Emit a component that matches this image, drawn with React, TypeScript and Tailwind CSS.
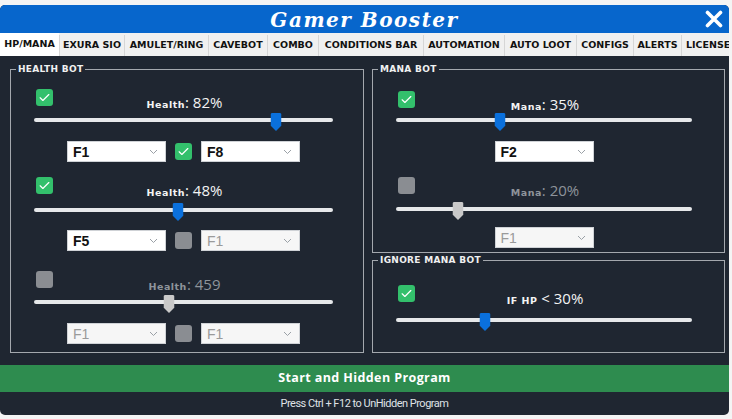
import React from "react";

const tabs = [
  { name: "HP/MANA", w: "w-[59px]", active: true },
  { name: "EXURA SIO", w: "w-[65px]" },
  { name: "AMULET/RING", w: "w-[84px]" },
  { name: "CAVEBOT", w: "w-[59px]" },
  { name: "COMBO", w: "w-[51px]" },
  { name: "CONDITIONS BAR", w: "w-[105px]" },
  { name: "AUTOMATION", w: "w-[81px]" },
  { name: "AUTO LOOT", w: "w-[72px]" },
  { name: "CONFIGS", w: "w-[57px]" },
  { name: "ALERTS", w: "w-[48px]" },
  { name: "LICENSE", w: "w-[60px] justify-start pl-[4px]" },
];

function Check({ on }: { on: boolean }) {
  return (
    <div
      className={
        "w-[17px] h-[17px] rounded-[3px] flex items-center justify-center shrink-0 " +
        (on ? "bg-[#33c06c]" : "bg-[#8a8d92]")
      }
    >
      {on && (
        <svg width="13" height="13" viewBox="0 0 24 24" fill="none">
          <path d="M4 12.5l5 5L20 6.5" stroke="white" strokeWidth="2.2" strokeLinecap="round" strokeLinejoin="round" />
        </svg>
      )}
    </div>
  );
}

function Select({ value, on }: { value: string; on: boolean }) {
  return (
    <div
      className={
        "w-[99px] h-[21px] flex items-center justify-between pl-[5px] pr-[7px] border border-[#cfd2d6] " +
        (on ? "bg-white" : "bg-[#f6f6f6]")
      }
    >
      <span
        className={
          "font-['Liberation_Sans',sans-serif] text-[14px] leading-none " +
          (on ? "font-bold text-[#111]" : "text-[#9a9a9a]")
        }
      >
        {value}
      </span>
      <svg width="9" height="6" viewBox="0 0 9 6" fill="none">
        <path d="M1 1l3.5 3.5L8 1" stroke="#9aa0a6" strokeWidth="1" />
      </svg>
    </div>
  );
}

function Slider({ pct, on, width }: { pct: number; on: boolean; width: string }) {
  return (
    <div className={"relative h-[18px] " + width}>
      <div className="absolute left-0 right-0 top-[5px] h-[4px] rounded-full bg-[#e6e8ea]" />
      <svg
        className="absolute top-0 -translate-x-1/2"
        style={{ left: `${pct}%` }}
        width="11"
        height="18"
        viewBox="0 0 11 18"
      >
        <path
          d="M1.5 0H9.5Q11 0 11 1.5V12.5L5.5 18L0 12.5V1.5Q0 0 1.5 0Z"
          fill={on ? "#0a70dc" : "#c9c9c9"}
        />
      </svg>
    </div>
  );
}

function Label({ name, value, on }: { name: string; value: string; on: boolean }) {
  return (
    <div className={"text-center leading-none mt-[5px] " + (on ? "text-[#f4f4f4]" : "text-[#8e949b]")}>
      <span className="font-['DejaVu_Sans',sans-serif] font-bold text-[9.5px] tracking-[0.5px]">{name}</span>
      <span className="font-['Open_Sans',sans-serif] text-[15px]">{value}</span>
    </div>
  );
}

type SectionProps = {
  on: boolean;
  name: string;
  value: string;
  pct: number;
  width: string;
  mt: string;
  sliderMt: string;
  rowMt?: string;
  row?: React.ReactNode;
};

function Section({ on, name, value, pct, width, mt, sliderMt, rowMt, row }: SectionProps) {
  return (
    <div className={mt + " " + width}>
      <div className="grid grid-cols-[17px_1fr_17px] pl-[2px] h-[17px]">
        <Check on={on} />
        <Label name={name} value={value} on={on} />
      </div>
      <div className={sliderMt}>
        <Slider pct={pct} on={on} width={width} />
      </div>
      {row && <div className={"flex justify-center items-center gap-[9px] " + rowMt}>{row}</div>}
    </div>
  );
}

function Group({ title, h, children }: { title: string; h: string; children: React.ReactNode }) {
  return (
    <fieldset className={"border border-[#a4a8ae] m-0 p-0 " + h}>
      <legend className="ml-[5px] px-[2px] font-['DejaVu_Sans',sans-serif] font-bold text-[9px] leading-[10px] tracking-[0.3px] text-[#f0f0f0]">
        {title}
      </legend>
      <div className="ml-[23px]">{children}</div>
    </fieldset>
  );
}

export default function App() {
  return (
    <div className="w-[732px] h-[419px] bg-[#f4f4f4] pt-[5px] overflow-hidden">
      <div className="w-[729px] h-[410px] rounded-[5px] overflow-hidden flex flex-col bg-[#1f2631]">
        {/* title bar */}
        <div className="h-[28px] bg-[#0766cc] flex items-center justify-center relative shrink-0">
          <span className="font-['DejaVu_Serif',serif] font-bold italic text-[20px] tracking-[1.5px] text-white leading-none mt-[2px]">
            Gamer Booster
          </span>
          <svg className="absolute right-[6px] top-[5px]" width="18" height="18" viewBox="0 0 18 18">
            <path d="M2.5 2.5L15.5 15.5M15.5 2.5L2.5 15.5" stroke="white" strokeWidth="3.6" strokeLinecap="round" />
          </svg>
        </div>

        {/* tabs */}
        <div className="h-[23px] bg-[#f0f0f0] flex shrink-0 overflow-hidden">
          {tabs.map((t) => (
            <div
              key={t.name}
              className={
                "shrink-0 flex items-center justify-center font-['DejaVu_Sans',sans-serif] font-bold text-[9.5px] text-[#111] whitespace-nowrap " +
                t.w +
                (t.active ? " bg-white h-[23px]" : " mt-[2px] h-[21px] border-l border-[#d6d6d6] bg-[#f0f0f0]")
              }
            >
              {t.name}
            </div>
          ))}
        </div>

        {/* content */}
        <div className="h-[309px] shrink-0 flex gap-[8px] pl-[10px] pt-[8px]">
          <div className="w-[354px]">
            <Group title="HEALTH BOT" h="h-[289px]">
              <Section
                on
                name="Health"
                value=": 82%"
                pct={81}
                width="w-[299px]"
                mt="mt-[15px]"
                sliderMt="mt-[7px]"
                rowMt="mt-[10px]"
                row={
                  <>
                    <Select value="F1" on />
                    <Check on />
                    <Select value="F8" on />
                  </>
                }
              />
              <Section
                on
                name="Health"
                value=": 48%"
                pct={48}
                width="w-[299px]"
                mt="mt-[15px]"
                sliderMt="mt-[9px]"
                rowMt="mt-[9px]"
                row={
                  <>
                    <Select value="F5" on />
                    <Check on={false} />
                    <Select value="F1" on={false} />
                  </>
                }
              />
              <Section
                on={false}
                name="Health"
                value=": 459"
                pct={45}
                width="w-[299px]"
                mt="mt-[20px]"
                sliderMt="mt-[7px]"
                rowMt="mt-[10px]"
                row={
                  <>
                    <Select value="F1" on={false} />
                    <Check on={false} />
                    <Select value="F1" on={false} />
                  </>
                }
              />
            </Group>
          </div>

          <div className="w-[353px] flex flex-col gap-[2px]">
            <Group title="MANA BOT" h="h-[189px]">
              <Section
                on
                name="Mana"
                value=": 35%"
                pct={35}
                width="w-[296px]"
                mt="mt-[17px]"
                sliderMt="mt-[5px]"
                rowMt="mt-[10px]"
                row={<Select value="F2" on />}
              />
              <Section
                on={false}
                name="Mana"
                value=": 20%"
                pct={21}
                width="w-[296px]"
                mt="mt-[15px]"
                sliderMt="mt-[8px]"
                rowMt="mt-[7px]"
                row={<Select value="F1" on={false} />}
              />
            </Group>
            <Group title="IGNORE MANA BOT" h="h-[98px]">
              <Section
                on
                name="IF HP"
                value=" < 30%"
                pct={30}
                width="w-[296px]"
                mt="mt-[20px]"
                sliderMt="mt-[11px]"
              />
            </Group>
          </div>
        </div>

        {/* start button */}
        <div className="h-[27px] shrink-0 bg-[#2e8c4f] flex items-center justify-center">
          <span className="font-['Open_Sans',sans-serif] font-bold text-[12.5px] tracking-[0.4px] text-white">
            Start and Hidden Program
          </span>
        </div>

        {/* footer */}
        <div className="h-[23px] shrink-0 flex items-center justify-center pt-[2px]">
          <span className="font-['Roboto',sans-serif] text-[11px] tracking-[-0.5px] text-[#dfe2e6]">
            Press Ctrl + F12 to UnHidden Program
          </span>
        </div>
      </div>
    </div>
  );
}
